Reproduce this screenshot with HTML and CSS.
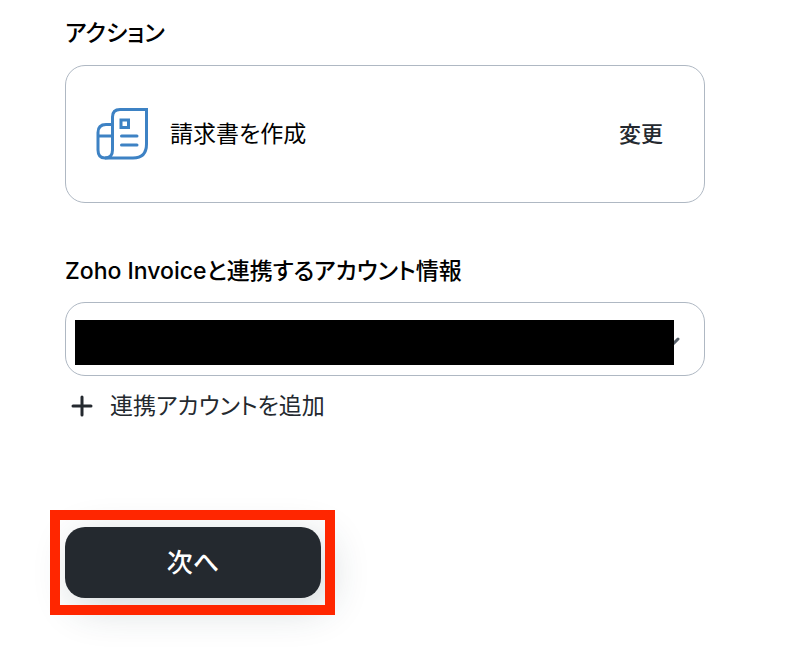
FILE: index.html
```html
<!DOCTYPE html>
<html lang="ja">
<head>
<meta charset="utf-8">
<meta name="viewport" content="width=device-width, initial-scale=1">
<title>アクション</title>
<link rel="stylesheet" href="styles.css">
</head>
<body>
<main class="form">
  <section class="group">
    <h2 class="label">アクション</h2>
    <div class="card">
      <svg class="card-icon" viewBox="0 0 54 54" aria-hidden="true">
        <path d="M16.500 43V10Q16.500 2.500 24 2.500H50.500V37Q50.500 51 37 51H9"/>
        <path d="M16.500 17.500H10Q2 17.500 2 25.500V43Q2 51 9 51Q16.500 51 16.500 43"/>
        <path d="M2 29H16.500"/>
        <path d="M25 13H32.500V20.500H25Z"/>
        <path d="M25.500 29H41M25.500 38H41" stroke-linecap="round"/>
      </svg>
      <span class="card-title">請求書を作成</span>
      <button class="change" type="button">変更</button>
    </div>
  </section>
  <section class="group account">
    <label class="label" for="account">Zoho Invoiceと連携するアカウント情報</label>
    <div class="select-box">
      <select id="account" class="select"><option value=""></option></select>
      <svg class="chevron" viewBox="0 0 20 12" aria-hidden="true"><path d="M2 2L10 10L18 2"/></svg>
      <span class="redaction"></span>
    </div>
    <button class="add" type="button">
      <svg class="plus" viewBox="0 0 22 22" aria-hidden="true"><path d="M11 2V20M2 11H20"/></svg>
      連携アカウントを追加
    </button>
  </section>
  <div class="action">
    <button class="next" type="button">次へ</button>
    <span class="highlight"></span>
  </div>
</main>
</body>
</html>
```
FILE: styles.css
```css
* {
  box-sizing: border-box;
}

body {
  margin: 0;
  background: #fff;
  color: #000;
  font-family: Inter, "Noto Sans CJK JP", sans-serif;
  font-size: 23px;
  line-height: 32px;
  font-feature-settings: "palt";
}

button,
select {
  margin: 0;
  padding: 0;
  border: 0;
  background: none;
  color: #24292f;
  font: inherit;
  font-feature-settings: inherit;
}

button {
  cursor: pointer;
}

.form {
  max-width: 786px;
  padding: 17px 81px 64px 65px;
}

.label {
  display: block;
  margin: 0 0 16px;
  font-size: 23px;
  font-weight: 500;
}

.card {
  display: flex;
  align-items: center;
  gap: 20px;
  padding: 41px 41px 41px 30px;
  border: 1px solid #afb8c3;
  border-radius: 20px;
}

.card-icon {
  width: 54px;
  height: 54px;
  fill: none;
  stroke: #3d82c4;
  stroke-width: 3;
}

.card-title {
  flex: 1;
}

.change {
  font-size: 22px;
  font-weight: 500;
}

.account {
  margin-top: 52px;
}

.account .label {
  margin-bottom: 15px;
}

.select-box {
  position: relative;
}

.select {
  display: block;
  width: 100%;
  height: 74px;
  padding: 0 40px 0 16px;
  border: 1px solid #afb8c3;
  border-radius: 20px;
  appearance: none;
}

.chevron {
  position: absolute;
  top: 35px;
  right: 25px;
  width: 20px;
  height: 12px;
  fill: none;
  stroke: #57606a;
  stroke-width: 3;
  stroke-linecap: round;
}

.redaction {
  position: absolute;
  top: 18px;
  right: 31px;
  bottom: 11px;
  left: 10px;
  background: #000;
}

.add {
  display: flex;
  align-items: center;
  gap: 17px;
  margin-top: 14px;
  padding-left: 6px;
}

.plus {
  width: 22px;
  height: 22px;
  fill: none;
  stroke: #24292f;
  stroke-width: 3;
  stroke-linecap: round;
}

.action {
  position: relative;
  width: 256px;
  margin-top: 105px;
}

.next {
  display: block;
  width: 100%;
  height: 71px;
  border-radius: 20px;
  background: #24292f;
  box-shadow: 8px 10px 40px rgba(36, 60, 70, 0.2);
  color: #fff;
  font-size: 26px;
  font-weight: 500;
}

.highlight {
  position: absolute;
  top: -17px;
  right: -14px;
  bottom: -17px;
  left: -15px;
  border: 10px solid #ff2600;
  pointer-events: none;
}
```
